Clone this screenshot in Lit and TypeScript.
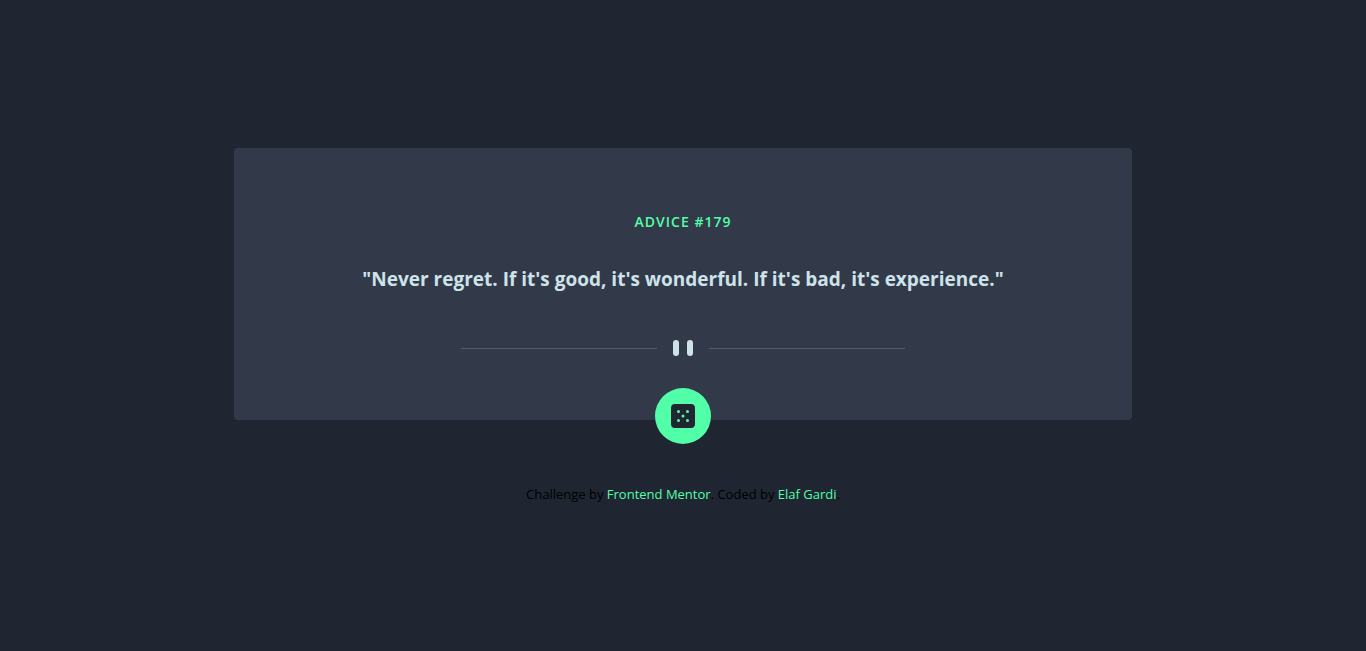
import { LitElement, html, css } from "lit";
import { customElement, state } from "lit/decorators.js";

@customElement("app-root")
export class AppRoot extends LitElement {
  static styles = css`
    :host {
      display: flex;
      flex-direction: column;
      align-items: center;
      justify-content: center;
      min-height: 100vh;
      box-sizing: border-box;
      background: hsl(218, 23%, 16%);
      font-family: "Segoe UI", "Open Sans", "Noto Sans", sans-serif;
    }
    .card {
      display: flex;
      flex-direction: column;
      align-items: center;
      box-sizing: border-box;
      width: min(898px, 92%);
      padding: 64px 32px 0;
      border-radius: 4px;
      background: hsl(217, 19%, 24%);
      text-align: center;
    }
    h1 {
      margin: 0;
      font-size: 14px;
      line-height: 20px;
      font-weight: 600;
      letter-spacing: 1px;
      color: #52ffa8;
    }
    blockquote {
      margin: 32px 0 0;
      font-size: 19px;
      line-height: 30px;
      font-weight: 700;
      color: #cee3e9;
    }
    .divider {
      width: 444px;
      max-width: 100%;
      height: 16px;
      margin: 46px 0 32px;
    }
    .dice {
      display: grid;
      place-items: center;
      width: 56px;
      height: 56px;
      margin-bottom: -24px;
      padding: 0;
      border: 0;
      border-radius: 50%;
      background: #52ffa8;
      cursor: pointer;
    }
    .dice:hover {
      box-shadow: 0 0 24px #52ffa8;
    }
    footer {
      margin-top: 64px;
      font-size: 13px;
      line-height: 20px;
      color: #000;
      text-align: center;
    }
    a {
      color: #52ffa8;
      text-decoration: none;
    }
  `;

  @state() private number = 179;
  @state() private advice = "Never regret. If it's good, it's wonderful. If it's bad, it's experience.";

  render() {
    return html`
      <main class="card">
        <h1>ADVICE #${this.number}</h1>
        <blockquote>"${this.advice}"</blockquote>
        <svg class="divider" viewBox="0 0 444 16" aria-hidden="true">
          <path fill="#4f5d74" d="M0 8h196v1H0zM248 8h196v1H248z" />
          <g fill="#cee3e9">
            <rect x="212" width="6" height="16" rx="3" />
            <rect x="226" width="6" height="16" rx="3" />
          </g>
        </svg>
        <button class="dice" aria-label="New advice">
          <svg width="24" height="24" aria-hidden="true">
            <path
              fill="#202733"
              d="M20 0H4a4.005 4.005 0 0 0-4 4v16a4.005 4.005 0 0 0 4 4h16a4.005 4.005 0 0 0 4-4V4a4.005 4.005 0 0 0-4-4ZM7.5 18a1.5 1.5 0 1 1 0-3 1.5 1.5 0 0 1 0 3Zm0-9a1.5 1.5 0 1 1 0-3 1.5 1.5 0 0 1 0 3Zm4.500 4.500a1.5 1.5 0 1 1 0-3 1.5 1.5 0 0 1 0 3Zm4.500 4.500a1.5 1.5 0 1 1 0-3 1.5 1.5 0 0 1 0 3Zm0-9a1.5 1.5 0 1 1 0-3 1.5 1.5 0 0 1 0 3Z"
            />
          </svg>
        </button>
      </main>
      <footer>
        Challenge by <a href="#">Frontend Mentor</a>. Coded by <a href="#">Elaf Gardi</a>.
      </footer>
    `;
  }
}
